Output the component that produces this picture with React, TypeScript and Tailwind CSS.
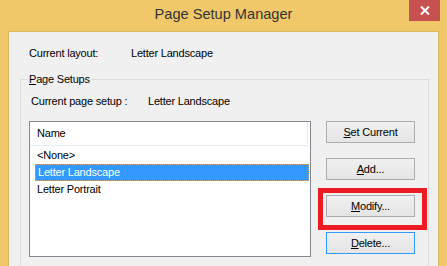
import React from "react";

const font = { fontFamily: '"Liberation Sans", Arial, sans-serif' };

const Btn = ({
  label,
  u,
  focused,
}: {
  label: string;
  u: number;
  focused?: boolean;
}) => (
  <div
    className={`w-[89px] h-[22px] flex items-center justify-center border bg-gradient-to-b from-[#f0f0f0] to-[#e5e5e5] text-[11px] tracking-[-0.2px] text-black ${
      focused ? "border-[#3399ff]" : "border-[#acacac]"
    }`}
  >
    <span>
      {label.slice(0, u)}
      <span className="underline underline-offset-[1px]">{label[u]}</span>
      {label.slice(u + 1)}
    </span>
  </div>
);

const App = () => {
  const items = ["<None>", "Letter Landscape", "Letter Portrait"];

  return (
    <div
      className="w-[447px] h-[266px] overflow-hidden bg-[#f0c86a] flex flex-col"
      style={font}
    >
      {/* title bar */}
      <div className="relative h-[31px] shrink-0 flex items-center justify-center">
        <span className="text-[14.6px] text-[#333333] -mt-[2px]">
          Page Setup Manager
        </span>
        <div className="absolute top-0 right-[7px] w-[31px] h-[21px] bg-[#c75050] flex items-center justify-center">
          <svg width="10" height="9" viewBox="0 0 10 9">
            <path
              d="M1 0.5 L9 8.5 M9 0.5 L1 8.5"
              stroke="white"
              strokeWidth="2"
            />
          </svg>
        </div>
      </div>

      {/* client area */}
      <div className="relative mx-[8px] flex-1 bg-[#f0f0f0] border-t border-x border-[#d9b862] text-[11px] tracking-[-0.2px] text-black">
        <div className="flex pt-[15px] pl-[20px] h-[28px] leading-[13px]">
          <span className="w-[102px]">Current layout:</span>
          <span>Letter Landscape</span>
        </div>

        {/* group box */}
        <div className="relative mt-[19px] ml-[11px] mr-[9px] border border-[#dcdcdc] h-[200px]">
          <span className="absolute -top-[7px] left-[7px] px-[1px] bg-[#f0f0f0] leading-[13px]">
            <span className="underline underline-offset-[1px]">P</span>age
            Setups
          </span>

          <div className="flex pt-[15px] pl-[10px] h-[28px] leading-[13px]">
            <span className="w-[117px]">Current page setup :</span>
            <span>Letter Landscape</span>
          </div>

          <div className="flex mt-[13px] pl-[8px]">
            {/* list */}
            <div className="w-[282px] h-[136px] border border-[#828790] bg-white flex flex-col">
              <div className="h-[24px] mr-[2px] flex items-center pl-[7px] border-b border-r border-[#e8edf3] leading-[13px]">
                Name
              </div>
              <div className="pt-[1px]">
                {items.map((it, i) => (
                  <div
                    key={i}
                    className={`h-[17px] ml-[5px] mr-[1px] flex items-center pl-[2px] leading-[13px] ${
                      i === 1
                        ? "bg-[#3399ff] text-white border border-dotted border-[#c9a77a] pl-[1px]"
                        : ""
                    }`}
                  >
                    {it}
                  </div>
                ))}
              </div>
            </div>

            {/* buttons */}
            <div className="ml-[15px] flex flex-col gap-[15px]">
              <Btn label="Set Current" u={0} />
              <Btn label="Add..." u={0} />
              <Btn label="Modify..." u={0} />
              <Btn label="Delete..." u={0} focused />
            </div>
          </div>
        </div>

        {/* red annotation */}
        <div className="absolute left-[309px] top-[156px] w-[109px] h-[42px] border-[5px] border-[#ed1c24]" />
      </div>
    </div>
  );
};

export default App;
